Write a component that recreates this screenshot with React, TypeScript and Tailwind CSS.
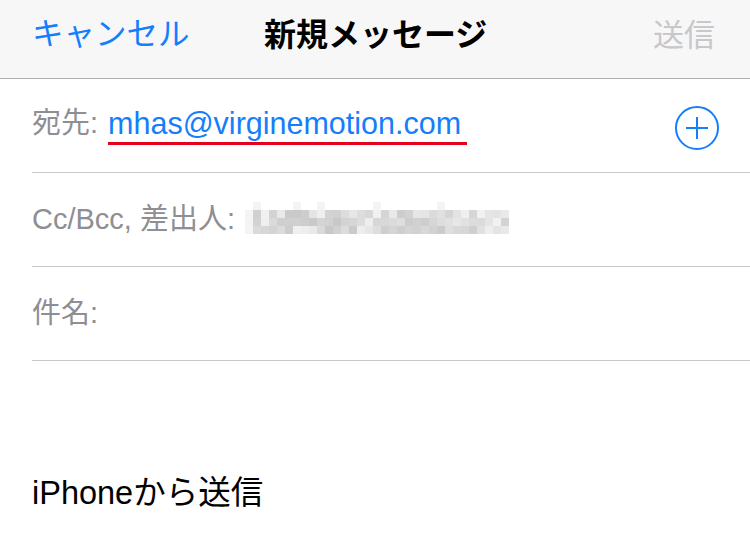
import React from "react"

const font = { fontFamily: '"Liberation Sans", "Noto Sans CJK JP", sans-serif' }

// pixelated (blurred) sender address
const cols = 33
const rows = 3
function shade(r: number, c: number) {
  const v = Math.abs(Math.sin(r * 12.9898 + c * 78.233) * 43758.5453) % 1
  return Math.round(200 + v * 42)
}

function Pixelated() {
  return (
    <svg width={cols * 8} height={40} viewBox={`0 0 ${cols * 8} 40`} className="block">
      {[0, 5, 8, 15, 23, 45].map((c) => (
        <rect key={"t" + c} x={c * 8 + 8} y={0} width={8} height={8} fill="#f4f4f4" />
      ))}
      {Array.from({ length: rows }).map((_, r) =>
        Array.from({ length: cols }).map((_, c) => {
          const g = c === 0 ? 244 : shade(r, c)
          return <rect key={r + "-" + c} x={c * 8} y={8 + r * 8} width={8} height={8} fill={`rgb(${g},${g},${g})`} />
        })
      )}
    </svg>
  )
}

function Row({ children }: { children: React.ReactNode }) {
  return (
    <div className="pl-8">
      <div className="h-[94px] flex items-center border-b border-[#c8c7cc] pr-8">{children}</div>
    </div>
  )
}

export default function App() {
  return (
    <div className="w-[750px] h-[540px] bg-white overflow-hidden" style={font}>
      <div className="h-[79px] bg-[#f7f7f7] border-b border-[#b2b2b2] flex items-center px-8 relative">
        <span className="text-[31.5px] text-[#157efb] leading-none -mt-2">キャンセル</span>
        <span className="absolute left-[264px] top-[19px] text-[32px] font-bold text-black leading-none">
          新規メッセージ
        </span>
        <span className="ml-auto text-[31px] text-[#c7c7cc] leading-none -mt-2 mr-[3px]">送信</span>
      </div>

      <Row>
        <span className="text-[29px] text-[#8e8e93] -mt-1">宛先:</span>
        <span className="relative ml-[10px] -mt-1 text-[30.5px] text-[#157efb]">
          mhas@virginemotion.com
          <span className="absolute left-0 -right-[6px] bottom-[1px] h-[3px] bg-[#e5001c]" />
        </span>
        <svg width="46" height="46" viewBox="0 0 46 46" className="ml-auto -mr-[2px] mt-1">
          <circle cx="23" cy="23" r="21" fill="none" stroke="#157efb" strokeWidth="2" />
          <path d="M23 12v22M12 23h22" stroke="#157efb" strokeWidth="2" />
        </svg>
      </Row>

      <Row>
        <span className="text-[29px] text-[#8e8e93]">Cc/Bcc, 差出人:</span>
        <div className="ml-[10px] mt-1">
          <Pixelated />
        </div>
      </Row>

      <Row>
        <span className="text-[29px] text-[#8e8e93]">件名:</span>
      </Row>

      <div className="pl-8 pt-[116px] text-[32.5px] text-black leading-none">iPhoneから送信</div>
    </div>
  )
}
